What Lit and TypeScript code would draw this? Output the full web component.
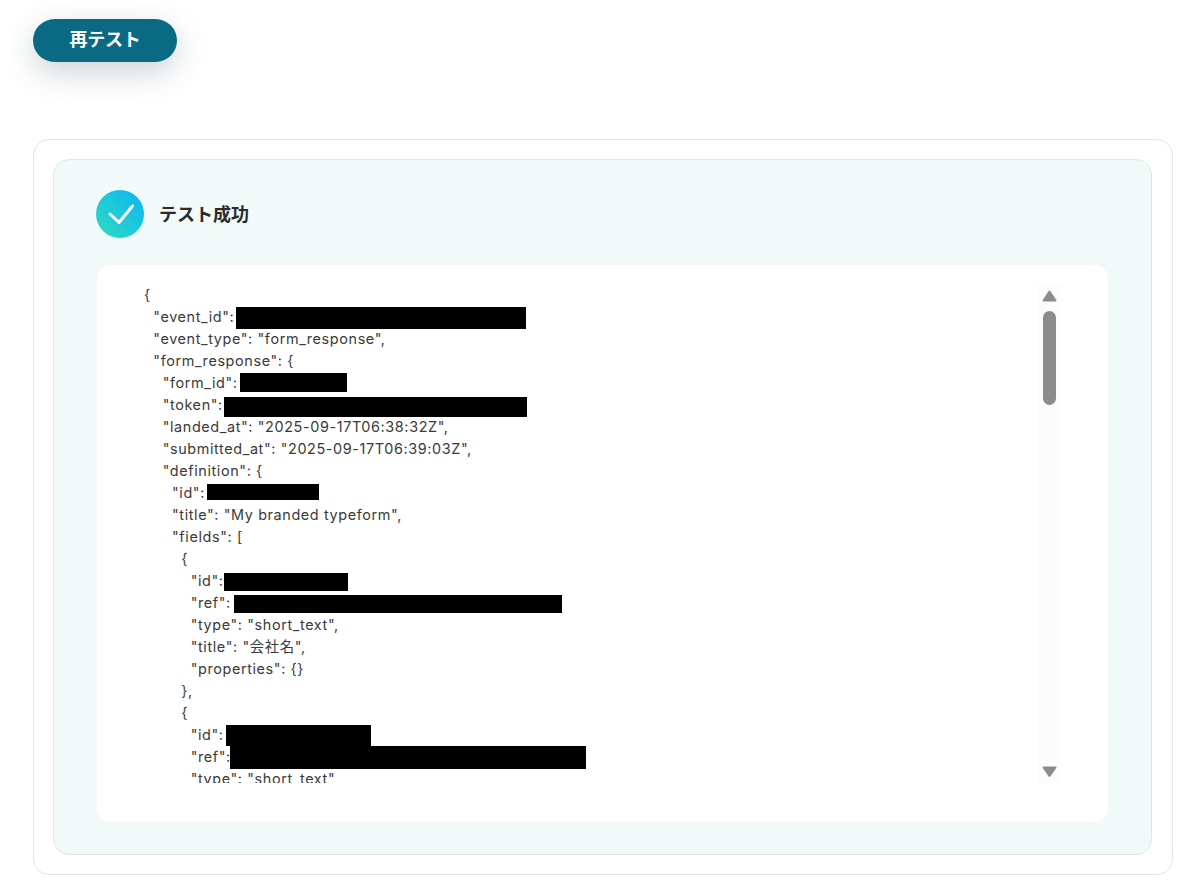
import { LitElement, html, css } from "lit";
import { customElement } from "lit/decorators.js";

const LINES = [
  "{",
  '  "event_id":',
  '  "event_type": "form_response",',
  '  "form_response": {',
  '    "form_id":',
  '    "token":',
  '    "landed_at": "2025-09-17T06:38:32Z",',
  '    "submitted_at": "2025-09-17T06:39:03Z",',
  '    "definition": {',
  '      "id":',
  '      "title": "My branded typeform",',
  '      "fields": [',
  "        {",
  '          "id":',
  '          "ref":',
  '          "type": "short_text",',
  '          "title": "会社名",',
  '          "properties": {}',
  "        },",
  "        {",
  '          "id":',
  '          "ref":',
  '          "type": "short_text"',
];

// Redaction boxes in page coordinates: x0, x1, y0, y1
const REDACTIONS = [
  [236, 526, 307, 329],
  [240, 347, 373, 392],
  [224, 527, 397, 417],
  [207, 319, 484, 500],
  [224, 348, 573, 591],
  [234, 562, 595, 613],
  [226, 371, 725, 746],
  [230, 586, 746, 769],
];

@customElement("app-root")
export class AppRoot extends LitElement {
  static styles = css`
    :host {
      display: block;
      background: #fff;
      min-height: 891px;
      font-family: Inter, "Noto Sans CJK JP", sans-serif;
      color: #333;
    }
    .page {
      padding: 19px 19px 16px 33px;
      display: flex;
      flex-direction: column;
      align-items: stretch;
    }
    .retest {
      align-self: flex-start;
      width: 144px;
      height: 43px;
      border: 0;
      padding: 0 0 5px;
      border-radius: 22px;
      background: #0b6a83;
      color: #fff;
      font: 700 18px/26px "Noto Sans CJK JP", sans-serif;
      letter-spacing: -0.2px;
      text-align: center;
      box-shadow: 0 10px 30px rgba(45, 65, 85, 0.24);
    }
    .outer {
      margin-top: 77px;
      height: 736px;
      box-sizing: border-box;
      border: 1px solid #e2e3e6;
      border-radius: 16px;
      background: #fff;
      padding: 19px 20px 19px 19px;
    }
    .inner {
      height: 100%;
      box-sizing: border-box;
      border: 1px solid #e2e6e7;
      border-radius: 16px;
      background: #f1faf9;
      padding: 30px 43px 32px 42px;
      display: flex;
      flex-direction: column;
    }
    .head {
      display: flex;
      align-items: center;
      gap: 15px;
      height: 48px;
    }
    .badge {
      width: 48px;
      height: 48px;
      border-radius: 50%;
      background: linear-gradient(45deg, #2fdcc0 0%, #0db5f2 100%);
      display: flex;
      align-items: center;
      justify-content: center;
    }
    .title {
      font: 700 18px/26px "Noto Sans CJK JP", sans-serif;
      color: #2b2b2b;
      padding-bottom: 2px;
    }
    .panel {
      margin-top: 27px;
      margin-left: 1px;
      flex: 1;
      min-height: 0;
      background: #fff;
      border-radius: 14px;
      padding: 19px 47px 39px 47px;
      display: flex;
    }
    .code {
      position: relative;
      flex: 1;
      min-width: 0;
      overflow: hidden;
      font-size: 14.4px;
      line-height: 22px;
      letter-spacing: 0.62px;
      color: #3a3a3a;
    }
    .line {
      height: 22px;
      white-space: pre;
    }
    .redact {
      position: absolute;
      background: #000;
    }
    .bar {
      width: 23px;
      background: #fcfcfc;
      display: flex;
      flex-direction: column;
      align-items: center;
    }
    .arrow {
      display: block;
      flex: none;
      margin-top: 6px;
    }
    .thumb {
      flex: none;
      width: 13px;
      height: 94px;
      margin-top: 9px;
      border-radius: 7px;
      background: #8c8c8c;
    }
    .arrow.down {
      margin-top: auto;
      margin-bottom: 5px;
    }
  `;

  render() {
    return html`
      <div class="page">
        <button class="retest">再テスト</button>
        <section class="outer">
          <div class="inner">
            <div class="head">
              <span class="badge">
                <svg width="28" height="24" viewBox="0 0 28 24" fill="none">
                  <path d="M4 12 L13 20.5 L26.5 4" stroke="#fff" stroke-width="3" stroke-linecap="round" stroke-linejoin="round" />
                </svg>
              </span>
              <span class="title">テスト成功</span>
            </div>
            <div class="panel">
              <div class="code">
                ${LINES.map((l) => html`<div class="line">${l}</div>`)}
                ${REDACTIONS.map(
                  ([x0, x1, y0, y1]) =>
                    html`<span class="redact" style="left:${x0 - 144}px;width:${x1 - x0}px;top:${y0 - 284}px;height:${y1 - y0}px"></span>`
                )}
              </div>
              <div class="bar">
                <svg class="arrow" width="15" height="12" viewBox="0 0 15 12">
                  <path d="M7.5 1.5 L13.5 10.5 H1.5 Z" fill="#8c8c8c" stroke="#8c8c8c" stroke-width="2" stroke-linejoin="round" />
                </svg>
                <div class="thumb"></div>
                <svg class="arrow down" width="15" height="12" viewBox="0 0 15 12">
                  <path d="M1.5 1.5 H13.5 L7.5 10 Z" fill="#8c8c8c" stroke="#8c8c8c" stroke-width="2" stroke-linejoin="round" />
                </svg>
              </div>
            </div>
          </div>
        </section>
      </div>
    `;
  }
}
